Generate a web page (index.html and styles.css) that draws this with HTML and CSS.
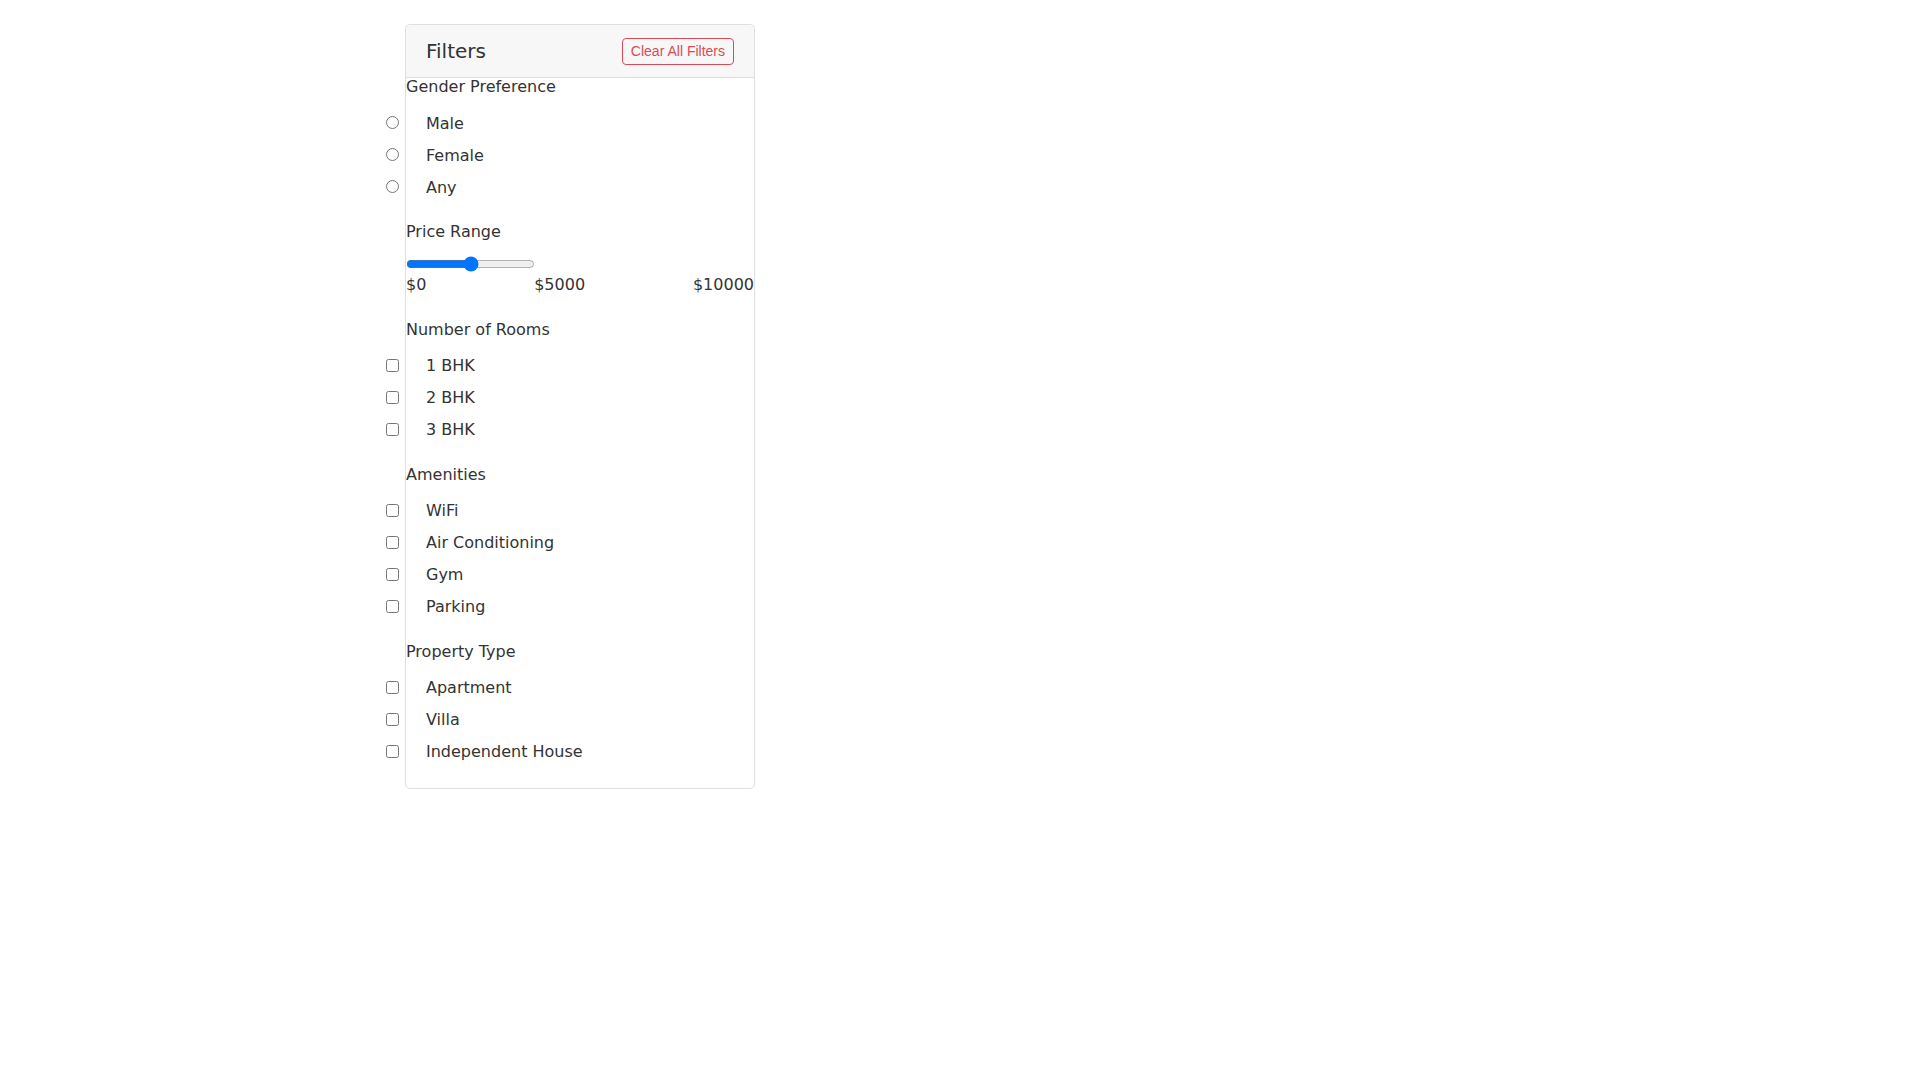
FILE: index.html
```html
<!DOCTYPE html>
<html lang="en">
<head>
    <meta charset="UTF-8">
    <meta name="viewport" content="width=device-width, initial-scale=1.0">
    <title>Filters</title>
    <link rel="stylesheet" href="styles.css">
</head>
<body>

    <div class="filter-card">
        <div class="filter-header">
            <h5 class="filter-title">Filters</h5>
            <button class="clear-btn" onclick="clearFilters()">Clear All Filters</button>
        </div>

        <div class="filter-body">
            <div class="filter-section">
                <div class="section-label">Gender Preference</div>
                <label class="option"><input type="radio" name="gender" value="male"><span>Male</span></label>
                <label class="option"><input type="radio" name="gender" value="female"><span>Female</span></label>
                <label class="option"><input type="radio" name="gender" value="any"><span>Any</span></label>
            </div>

            <div class="filter-section">
                <div class="section-label">Price Range</div>
                <input type="range" class="price-range" id="priceRange" min="0" max="10000" value="5000">
                <div class="price-labels">
                    <span>$0</span>
                    <span>$5000</span>
                    <span>$10000</span>
                </div>
            </div>

            <div class="filter-section">
                <div class="section-label">Number of Rooms</div>
                <label class="option"><input type="checkbox" value="1"><span>1 BHK</span></label>
                <label class="option"><input type="checkbox" value="2"><span>2 BHK</span></label>
                <label class="option"><input type="checkbox" value="3"><span>3 BHK</span></label>
            </div>

            <div class="filter-section">
                <div class="section-label">Amenities</div>
                <label class="option"><input type="checkbox" value="wifi"><span>WiFi</span></label>
                <label class="option"><input type="checkbox" value="ac"><span>Air Conditioning</span></label>
                <label class="option"><input type="checkbox" value="gym"><span>Gym</span></label>
                <label class="option"><input type="checkbox" value="parking"><span>Parking</span></label>
            </div>

            <div class="filter-section">
                <div class="section-label">Property Type</div>
                <label class="option"><input type="checkbox" value="apartment"><span>Apartment</span></label>
                <label class="option"><input type="checkbox" value="villa"><span>Villa</span></label>
                <label class="option"><input type="checkbox" value="house"><span>Independent House</span></label>
            </div>
        </div>
    </div>

    <script>
    function clearFilters() {
        var inputs = document.querySelectorAll('.filter-body input');
        for (var i = 0; i < inputs.length; i++) {
            if (inputs[i].type === 'range') {
                inputs[i].value = 5000;
            } else {
                inputs[i].checked = false;
            }
        }
    }
    </script>

</body>
</html>
```

FILE: styles.css
```css
body {
    font-family: 'DejaVu Sans', Verdana, sans-serif;
    font-size: 16px;
    color: #333;
    background-color: #fff;
    margin: 0;
}

.filter-card {
    width: 350px;
    box-sizing: border-box;
    margin: 24px 0 0 405px;
    border: 1px solid #dfdfdf;
    border-radius: 5px;
}

.filter-header {
    display: flex;
    justify-content: space-between;
    align-items: center;
    height: 52px;
    padding: 0 20px 0 20px;
    background-color: #f7f7f8;
    border-bottom: 1px solid #dfdfdf;
    border-radius: 5px 5px 0 0;
}

.filter-title {
    margin: 0;
    font-size: 20px;
    font-weight: normal;
    color: #333;
}

.clear-btn {
    height: 27px;
    padding: 0 8px;
    font-family: 'Liberation Sans', Arial, sans-serif;
    font-size: 14px;
    line-height: 25px;
    color: #dc4a55;
    background-color: transparent;
    border: 1px solid #dc4a55;
    border-radius: 4px;
    cursor: pointer;
}

.filter-body {
    margin-top: -1px;
    padding-bottom: 1px;
}

.filter-section {
    padding-bottom: 15.5px;
}

.section-label {
    line-height: 19px;
    margin-bottom: 14.5px;
}

.option {
    display: flex;
    align-items: flex-start;
    height: 24px;
    margin: 0 0 8px -20px;
    cursor: pointer;
}

.option input {
    align-self: center;
    width: 13px;
    height: 13px;
    margin: 0 27px 0 0;
}

.option span {
    line-height: 26px;
}

.price-range {
    display: block;
    margin: 14.5px 2px 1px 0;
    padding: 0;
}

.price-labels {
    display: flex;
    justify-content: space-between;
    line-height: 24px;
    margin-bottom: 7.5px;
}
```
